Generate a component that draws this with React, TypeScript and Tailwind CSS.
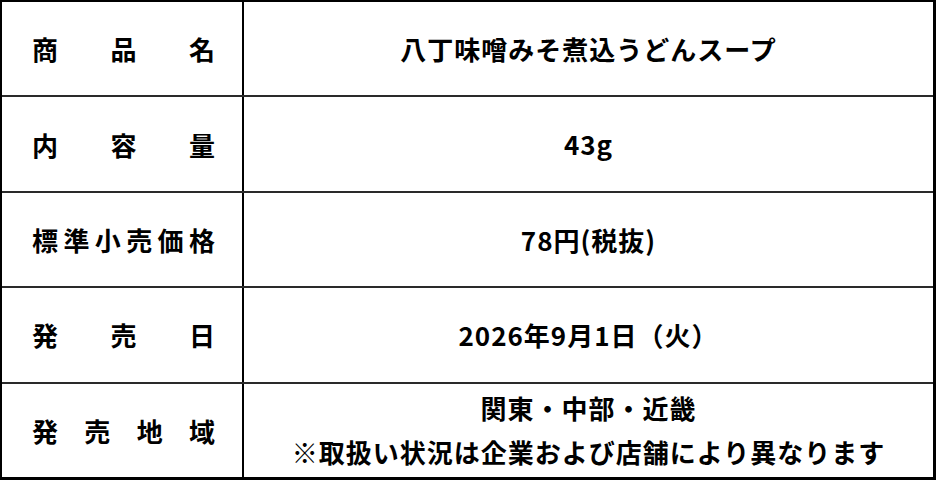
const rows: { label: string[]; value: string[] }[] = [
  { label: ['商', '品', '名'], value: ['八丁味噌みそ煮込うどんスープ'] },
  { label: ['内', '容', '量'], value: ['43g'] },
  { label: ['標', '準', '小', '売', '価', '格'], value: ['78円(税抜)'] },
  { label: ['発', '売', '日'], value: ['2026年9月1日（火）'] },
  {
    label: ['発', '売', '地', '域'],
    value: ['関東・中部・近畿', '※取扱い状況は企業および店舗により異なります'],
  },
];

export default function App() {
  return (
    <div
      className="w-[936px] h-[480px] bg-white text-black flex flex-col border-l-2 border-t-2 border-r-[3px] border-b-[3px] border-black"
      style={{ fontFamily: '"Noto Sans CJK JP", "Noto Sans", sans-serif' }}
    >
      {rows.map((row, i) => (
        <div
          key={i}
          className={
            i < rows.length - 1
              ? 'flex-1 flex border-b-2 border-[#2a2a2a]'
              : 'flex-1 flex'
          }
        >
          <div className="w-[242px] shrink-0 border-r-2 border-black flex items-center justify-between pl-[30px] pr-[27px] text-[26px] font-bold">
            {row.label.map((c, j) => (
              <span key={j}>{c}</span>
            ))}
          </div>
          <div className="flex-1 flex flex-col items-center justify-center text-[26px] font-bold tracking-[1px] leading-[44px]">
            {row.value.map((v, j) => (
              <div key={j}>{v}</div>
            ))}
          </div>
        </div>
      ))}
    </div>
  );
}
